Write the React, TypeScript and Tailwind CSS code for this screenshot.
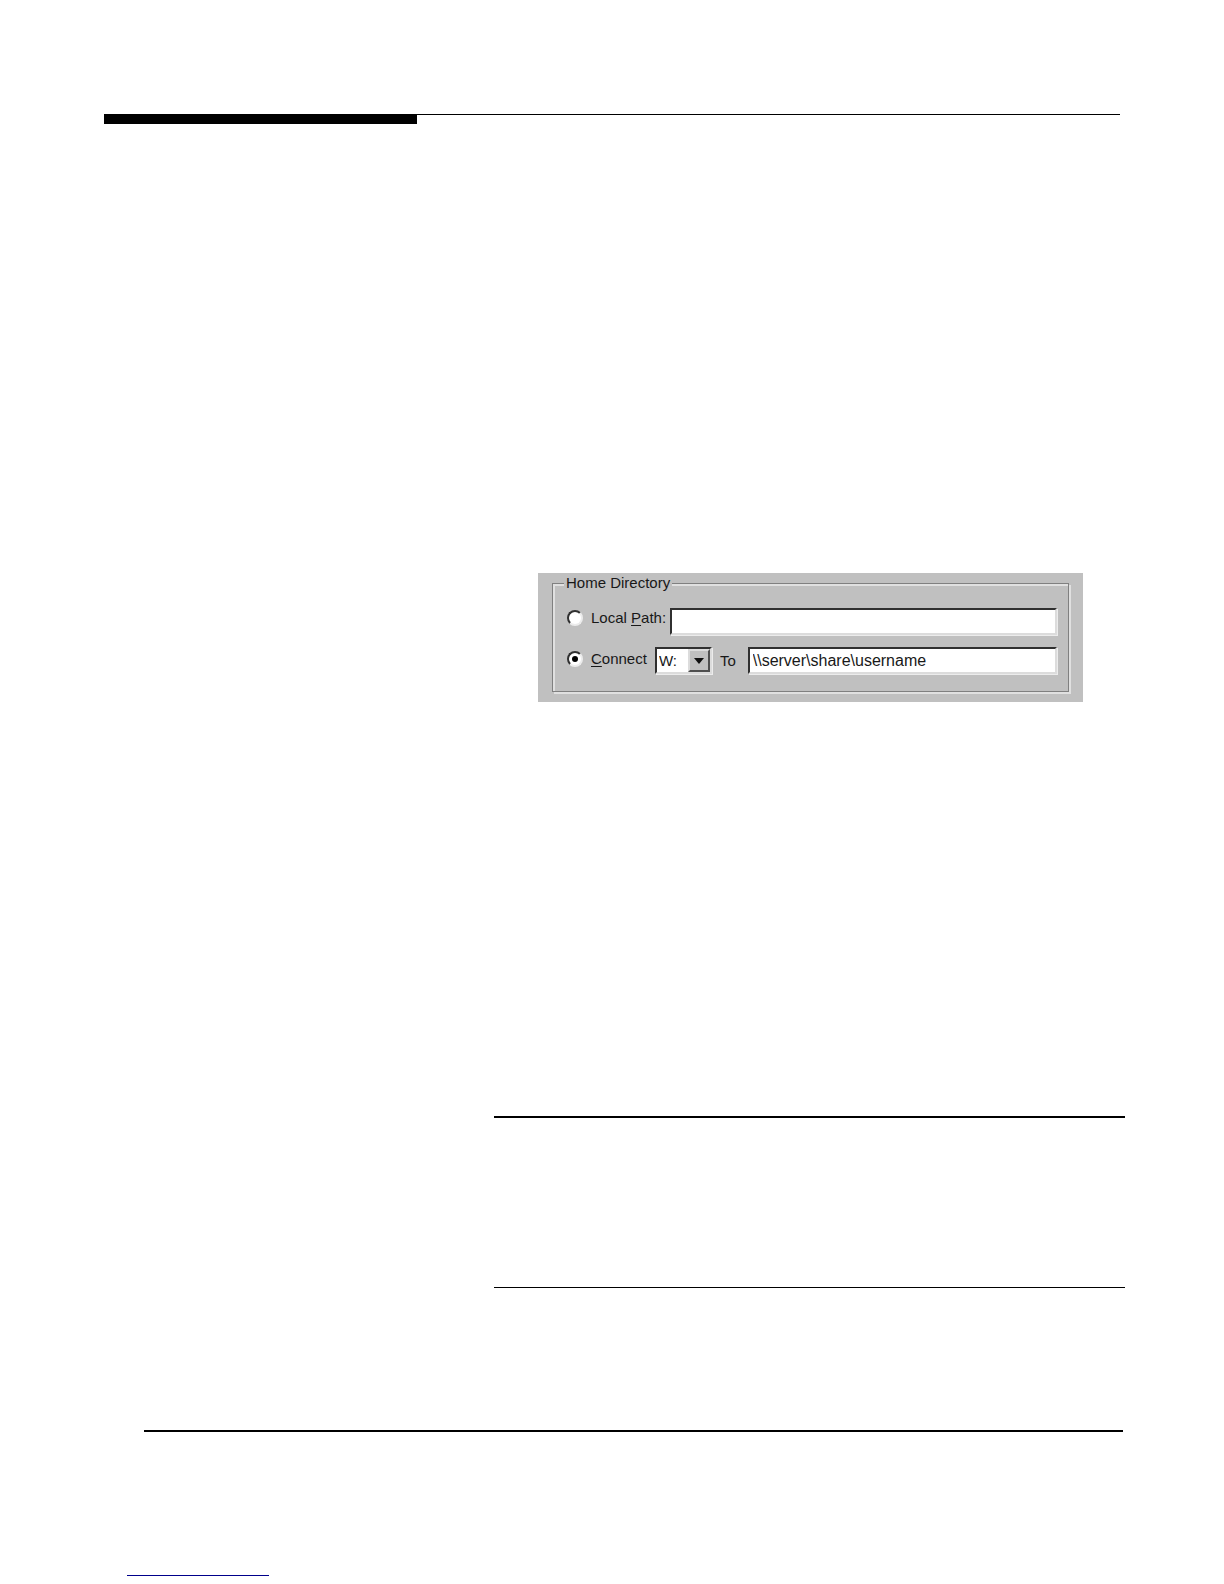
import React, { useState } from "react";

const sunken =
  "border-2 border-t-[#303030] border-l-[#303030] border-r-[#dcdcdc] border-b-[#dcdcdc] bg-white shadow-[1px_1px_0_#ececec] outline-none";

const radio =
  "grid size-4 shrink-0 appearance-none place-items-center rounded-full border-2 border-t-[#303030] border-l-[#303030] border-r-[#ececec] border-b-[#ececec] bg-white before:size-[6px] before:rounded-full before:content-[''] checked:before:bg-black";

function HomeDirectory() {
  const [mode, setMode] = useState("connect");
  const [path, setPath] = useState("");
  const [share, setShare] = useState("\\\\server\\share\\username");

  return (
    <section className="ml-11 mr-[42px] bg-[#c0c0c0] pt-px pr-[14px] pb-[10px] pl-[14px] font-['Liberation_Sans',Arial,sans-serif] text-[15px] leading-[18px] text-[#181818]">
      <fieldset className="min-w-0 border border-[#808080] pr-[11px] pb-[17px] pl-[14px] shadow-[inset_2px_2px_0_#e0e0e0,2px_2px_0_#e0e0e0]">
        <legend className="-ml-[3px] bg-[#c0c0c0] px-[2px]">Home Directory</legend>

        <div className="mt-4 flex h-[27px] items-start">
          <div className="flex h-5 shrink-0 items-center gap-2">
            <input
              type="radio"
              id="local"
              name="home"
              className={radio}
              checked={mode === "local"}
              onChange={() => setMode("local")}
            />
            <label htmlFor="local">
              Local <span className="underline underline-offset-2">P</span>ath:
            </label>
          </div>
          <input
            type="text"
            aria-label="Local path"
            className={`ml-1 h-full min-w-0 flex-1 px-1 text-base ${sunken}`}
            value={path}
            onChange={(e) => setPath(e.target.value)}
          />
        </div>

        <div className="mt-3 flex h-[27px] items-start">
          <div className="flex h-6 shrink-0 items-center gap-2">
            <input
              type="radio"
              id="connect"
              name="home"
              className={radio}
              checked={mode === "connect"}
              onChange={() => setMode("connect")}
            />
            <label htmlFor="connect">
              <span className="underline underline-offset-2">C</span>onnect
            </label>
          </div>
          <div className="relative ml-2 h-full w-[57px] shrink-0">
            <select
              aria-label="Drive letter"
              defaultValue="W:"
              className={`h-full w-full appearance-none pl-[2px] ${sunken}`}
            >
              <option>W:</option>
              <option>X:</option>
              <option>Y:</option>
              <option>Z:</option>
            </select>
            <span className="pointer-events-none absolute top-[2px] right-[2px] bottom-[2px] grid w-[22px] place-items-center border-2 border-t-[#dcdcdc] border-l-[#dcdcdc] border-r-[#505050] border-b-[#505050] bg-[#c0c0c0]">
              <svg width="10" height="6" viewBox="0 0 10 6" aria-hidden="true">
                <path d="M0 0H10L5 6Z" fill="#101010" />
              </svg>
            </span>
          </div>
          <label htmlFor="share" className="ml-2 shrink-0 self-center">
            To
          </label>
          <input
            type="text"
            id="share"
            className={`ml-3 h-full min-w-0 flex-1 px-[3px] text-base ${sunken}`}
            value={share}
            onChange={(e) => setShare(e.target.value)}
          />
        </div>
      </fieldset>
    </section>
  );
}

export default function App() {
  return (
    <div className="bg-white pt-[114px] pb-2">
      <header className="mr-[104px] ml-[104px] border-t border-black">
        <div className="h-[9px] w-[313px] bg-black" />
      </header>

      <main className="mt-[449px] mr-[99px] ml-[494px]">
        <HomeDirectory />
        <hr className="mt-[414px] border-t-2 border-black" />
        <hr className="mt-[169px] border-t border-black" />
      </main>

      <footer className="mt-[142px] mr-[101px] ml-[144px]">
        <hr className="border-t-2 border-black" />
      </footer>
      <div className="mt-[143px] ml-[127px] h-px w-[142px] bg-[#00008b]" />
    </div>
  );
}
